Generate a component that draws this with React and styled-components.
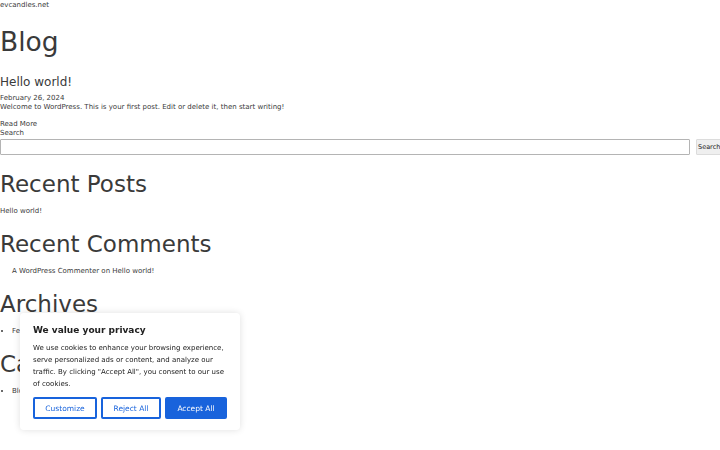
import React from "react";
import styled, { createGlobalStyle } from "styled-components";

const GlobalStyle = createGlobalStyle`
  html, body {
    margin: 0;
    padding: 0;
    background: #fff;
  }
  body {
    font-family: "DejaVu Sans", sans-serif;
    font-size: 7px;
    line-height: 9px;
    color: #3a3a3a;
  }
`;

const Page = styled.div`
  width: 720px;
  padding-top: 1px;
  overflow: hidden;
`;

const SiteName = styled.div`
  height: 9px;
`;

const PageTitle = styled.h1`
  font-size: 26.5px;
  font-weight: 400;
  line-height: 30px;
  margin: 17px 0 18px;
`;

const PostTitle = styled.h2`
  font-size: 12px;
  font-weight: 400;
  line-height: 14px;
  margin: 0;
`;

const PostDate = styled.div`
  margin-top: 4.5px;
`;

const Para = styled.p`
  margin: 0 0 8px;
`;

const SearchForm = styled.form`
  margin: 0;
`;

const SearchRow = styled.div`
  display: flex;
  gap: 6px;
  margin-top: 1.5px;
`;

const SearchInput = styled.input`
  width: 690px;
  height: 16px;
  box-sizing: border-box;
  border: 1px solid #b4b4b4;
  border-radius: 1px;
  padding: 0 3px;
  margin: 0;
  flex-shrink: 0;
`;

const SearchButton = styled.button`
  flex-shrink: 0;
  height: 16px;
  box-sizing: border-box;
  padding: 0 1px;
  margin: 0;
  font-family: "DejaVu Sans", sans-serif;
  font-size: 6.5px;
  color: #222;
  background: #efefef;
  border: 1px solid #dcdcdc;
  border-radius: 1px;
`;

const WidgetTitle = styled.h2`
  font-size: 23px;
  font-weight: 400;
  line-height: 26px;
  margin: ${(p) => (p.$first ? "16px" : "15.5px")} 0 9.5px;
`;

const List = styled.ul`
  margin: 0;
  padding-left: ${(p) => (p.$plain ? "0" : "12px")};
  list-style: ${(p) => (p.$bullet ? "disc" : "none")};
`;

const Item = styled.li``;

const Banner = styled.div`
  position: fixed;
  left: 20px;
  bottom: 20px;
  width: 220px;
  box-sizing: border-box;
  padding: 11px 13px 11px;
  background: #fff;
  border-radius: 4px;
  box-shadow: 0 0 7px rgba(0, 0, 0, 0.13);
`;

const BannerTitle = styled.div`
  font-size: 9px;
  font-weight: 700;
  line-height: 12px;
  color: #212121;
`;

const BannerText = styled.p`
  margin: 6px 0 7px;
  font-size: 7px;
  line-height: 12px;
  color: #212121;
`;

const Buttons = styled.div`
  display: flex;
  gap: 4px;
`;

const CookieButton = styled.button`
  width: ${(p) => p.$w}px;
  height: 22px;
  box-sizing: border-box;
  padding: 0;
  font-family: "DejaVu Sans", sans-serif;
  font-size: 7.5px;
  border-radius: 2px;
  border: 2px solid #1863dc;
  background: ${(p) => (p.$primary ? "#1863dc" : "#fff")};
  color: ${(p) => (p.$primary ? "#fff" : "#1863dc")};
`;

export default function App() {
  return (
    <Page>
      <GlobalStyle />
      <SiteName>evcandles.net</SiteName>
      <PageTitle>Blog</PageTitle>
      <PostTitle>Hello world!</PostTitle>
      <PostDate>February 26, 2024</PostDate>
      <Para>Welcome to WordPress. This is your first post. Edit or delete it, then start writing!</Para>
      <div>Read More</div>
      <SearchForm onSubmit={(e) => e.preventDefault()}>
        <label>Search</label>
        <SearchRow>
          <SearchInput type="text" />
          <SearchButton type="submit">Search</SearchButton>
        </SearchRow>
      </SearchForm>

      <WidgetTitle $first>Recent Posts</WidgetTitle>
      <List $plain>
        <Item>Hello world!</Item>
      </List>

      <WidgetTitle>Recent Comments</WidgetTitle>
      <List>
        <Item>A WordPress Commenter on Hello world!</Item>
      </List>

      <WidgetTitle>Archives</WidgetTitle>
      <List $bullet>
        <Item>February 2024</Item>
      </List>

      <WidgetTitle>Categories</WidgetTitle>
      <List $bullet>
        <Item>Blog</Item>
      </List>

      <Banner>
        <BannerTitle>We value your privacy</BannerTitle>
        <BannerText>
          We use cookies to enhance your browsing experience, serve personalized ads or content, and analyze our traffic. By clicking "Accept All", you consent to our use of cookies.
        </BannerText>
        <Buttons>
          <CookieButton $w={64}>Customize</CookieButton>
          <CookieButton $w={60}>Reject All</CookieButton>
          <CookieButton $w={62} $primary>Accept All</CookieButton>
        </Buttons>
      </Banner>
    </Page>
  );
}
